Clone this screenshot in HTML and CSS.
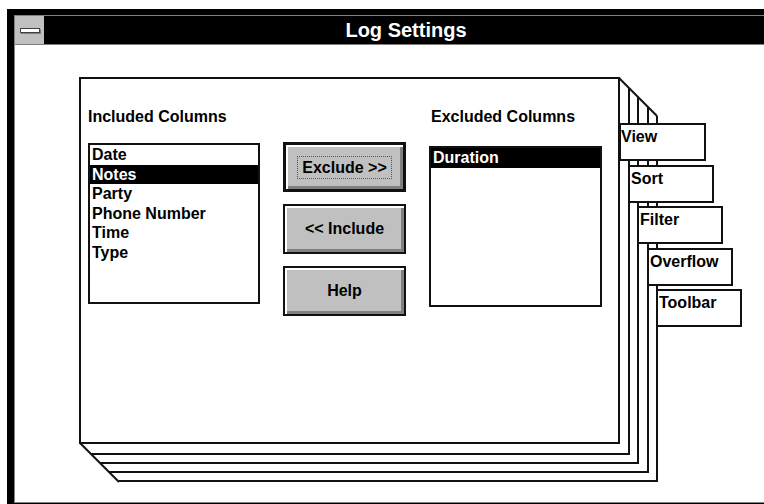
FILE: index.html
```html
<!DOCTYPE html>
<html>
<head>
    <title>Log Settings</title>
    <link rel="stylesheet" href="styles.css">
</head>
<body>
    <!-- Main dialog window -->
    <div class="window">
        <div class="frame">
            <div class="titlebar">
                <div class="sysmenu"><span class="sysbar"></span></div>
                <div class="title">Log Settings</div>
            </div>

            <div class="client">
                <!-- Notebook with stacked pages and side tabs -->
                <div class="notebook">
                    <svg class="stack" width="600" height="420" viewBox="0 0 600 420">
                        <g fill="none" stroke="#111" stroke-width="2">
                            <line x1="540" y1="1" x2="578" y2="39" />
                            <line x1="1" y1="366" x2="40" y2="405" />
                            <polyline points="550,11 550,377 12,377" />
                            <polyline points="559,20 559,386 21,386" />
                            <polyline points="569,30 569,395 30,395" />
                            <polyline points="578,39 578,404 40,404" />
                        </g>
                    </svg>

                    <div class="page">
                        <div class="column">
                            <div class="label">Included Columns</div>
                            <ul class="listbox">
                                <li>Date</li>
                                <li class="selected">Notes</li>
                                <li>Party</li>
                                <li>Phone Number</li>
                                <li>Time</li>
                                <li>Type</li>
                            </ul>
                        </div>

                        <div class="buttons">
                            <button class="btn btn-default"><span class="focus">Exclude &gt;&gt;</span></button>
                            <button class="btn">&lt;&lt; Include</button>
                            <button class="btn">Help</button>
                        </div>

                        <div class="column column-right">
                            <div class="label">Excluded Columns</div>
                            <ul class="listbox listbox-right">
                                <li class="selected">Duration</li>
                            </ul>
                        </div>
                    </div>

                    <div class="tab tab-view">View</div>
                    <div class="tab tab-sort">Sort</div>
                    <div class="tab tab-filter">Filter</div>
                    <div class="tab tab-overflow">Overflow</div>
                    <div class="tab tab-toolbar">Toolbar</div>
                </div>
            </div>
        </div>
    </div>
</body>
</html>
```

FILE: styles.css
```css
/* Page basics */
body {
    margin: 0;
    background: #fff;
    overflow: hidden;
    font-family: "Liberation Sans", Arial, sans-serif;
    color: #000;
}

/* Outer window frame (its right side is cut off by the screen) */
.window {
    margin: 9px 0 0 7px;
    border: 6px solid #000;
    border-left-width: 7px;
    border-right: 0;
}

.frame {
    border: 1px solid #808080;
    border-right: 0;
}

/* Title bar */
.titlebar {
    display: flex;
    height: 28px;
    background: #000;
    border-bottom: 1px solid #808080;
}

.sysmenu {
    width: 29px;
    background: #c0c0c0;
    display: flex;
    align-items: center;
    justify-content: center;
}

.sysbar {
    width: 18px;
    height: 3px;
    background: #fff;
    border: 1px solid #404040;
    box-shadow: 1px 1px 0 #808080;
}

.title {
    flex: 1;
    padding-left: 4px;
    text-align: center;
    color: #fff;
    font-weight: bold;
    font-size: 20px;
    line-height: 28px;
}

/* Client area */
.client {
    box-sizing: border-box;
    height: 457px;
    padding: 32px 0 0 64px;
    background: #fff;
}

/* Notebook */
.notebook {
    position: relative;
    width: 541px;
    height: 367px;
}

.stack {
    position: absolute;
    left: 0;
    top: 0;
    overflow: visible;
}

.page {
    position: relative;
    z-index: 1;
    box-sizing: border-box;
    width: 541px;
    height: 367px;
    border: 2px solid #111;
    background: #fff;
    display: flex;
    align-items: flex-start;
    padding: 28px 0 0 7px;
}

.column {
    display: flex;
    flex-direction: column;
}

.column-right {
    margin-left: 23px;
}

.column-right .label {
    padding-left: 2px;
}

.label {
    font-weight: bold;
    font-size: 16px;
    line-height: 19px;
}

/* List boxes */
.listbox {
    list-style: none;
    margin: 17px 0 0;
    padding: 0;
    box-sizing: border-box;
    width: 172px;
    height: 161px;
    border: 2px solid #111;
    background: #fff;
}

.listbox-right {
    width: 173px;
    margin-top: 20px;
}

.listbox li {
    padding-left: 2px;
    font-weight: bold;
    font-size: 16px;
    line-height: 19.5px;
    white-space: nowrap;
}

.listbox .selected {
    background: #000;
    color: #fff;
}

/* Push buttons */
.buttons {
    display: flex;
    flex-direction: column;
    gap: 12px;
    margin: 35px 0 0 23px;
}

.btn {
    box-sizing: border-box;
    width: 123px;
    height: 50px;
    padding: 0;
    background: #c0c0c0;
    border: 2px solid #111;
    box-shadow: inset 2px 2px 0 #fff, inset -3px -3px 0 #808080;
    font-family: "Liberation Sans", Arial, sans-serif;
    font-weight: bold;
    font-size: 16px;
    color: #000;
}

.btn-default {
    border-width: 3px;
}

.focus {
    display: inline-block;
    padding: 1px 4px;
    line-height: 19px;
    border: 1px dotted #555;
}

/* Side tabs */
.tab {
    position: absolute;
    z-index: 2;
    box-sizing: border-box;
    width: 86px;
    height: 38px;
    border: 2px solid #111;
    background: #fff;
    padding: 2px 0 0 1px;
    font-weight: bold;
    font-size: 16px;
    line-height: 19px;
}

.tab-view {
    left: 540px;
    top: 46px;
    width: 87px;
    padding-left: 0;
}

.tab-sort {
    left: 549px;
    top: 88px;
}

.tab-filter {
    left: 558px;
    top: 129px;
}

.tab-overflow {
    left: 568px;
    top: 171px;
}

.tab-toolbar {
    left: 577px;
    top: 212px;
}
```
